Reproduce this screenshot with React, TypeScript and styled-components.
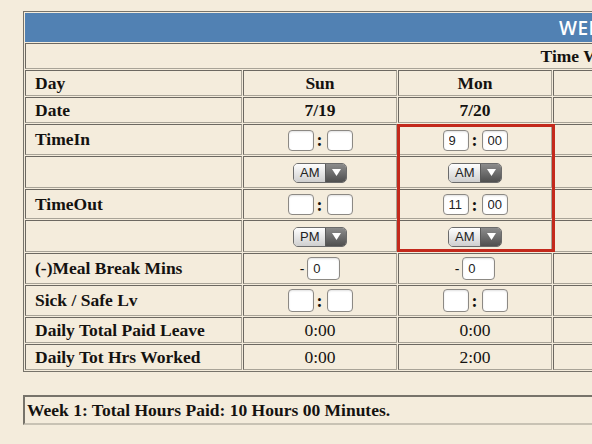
import React from 'react';
import styled, { createGlobalStyle } from 'styled-components';

const GlobalStyle = createGlobalStyle`
  html, body {
    margin: 0;
    padding: 0;
    background: #f4ecdc;
    overflow: hidden;
  }
  body {
    font-family: 'Liberation Serif', 'Times New Roman', serif;
    color: #141210;
  }
`;

const Page = styled.div`
  padding: 11px 0 0 23px;
  width: 1200px;
`;

const Sheet = styled.div`
  position: relative;
  width: 1130px;
`;

const Grid = styled.table`
  width: 1130px;
  table-layout: fixed;
  border-collapse: separate;
  border-spacing: 1px;
  border: 1px solid #77736a;
`;

const Row = styled.tr<{ $h: number }>`
  height: ${({ $h }) => $h}px;
`;

const TitleBar = styled.td`
  background: #5181b3;
  color: #fff;
  text-align: center;
  font-family: 'Open Sans', 'DejaVu Sans', sans-serif;
  font-size: 19px;
  font-weight: 600;
  letter-spacing: 0.5px;
  padding: 0 0 0 12px;
`;

const Cell = styled.td<{ $bold?: boolean; $label?: boolean }>`
  border: 1px solid;
  border-color: #6c6861 #a8a397 #a8a397 #6c6861;
  padding: 0 0 0 ${({ $label }) => ($label ? '9px' : '0')};
  text-align: ${({ $label }) => ($label ? 'left' : 'center')};
  font-size: 17.5px;
  font-weight: ${({ $bold }) => ($bold ? 'bold' : 'normal')};
  vertical-align: middle;
  white-space: nowrap;
  overflow: hidden;
`;

const Caption = styled(Cell)`
  padding-left: 8px;
`;

const Pair = styled.span`
  display: inline-flex;
  align-items: center;
  vertical-align: middle;
`;

const Box = styled.input<{ $w?: number; $h?: number }>`
  width: ${({ $w }) => $w ?? 26}px;
  height: ${({ $h }) => $h ?? 21}px;
  box-sizing: border-box;
  margin: 0;
  padding: 0 0 0 5px;
  border: 1px solid #8c8984;
  border-radius: 4px;
  background: #fff;
  box-shadow: inset 0 1px 2px rgba(0, 0, 0, 0.12);
  font-family: 'Liberation Sans', Arial, sans-serif;
  font-size: 13px;
  color: #222;
  outline: none;
`;

const Colon = styled.span`
  font-family: 'Liberation Serif', 'Times New Roman', serif;
  font-weight: bold;
  font-size: 18px;
  margin: 0 4px 0 3px;
  line-height: 1;
`;

const Dash = styled.span`
  font-family: 'Liberation Sans', Arial, sans-serif;
  font-size: 14px;
  margin-right: 3px;
`;

const Picker = styled.span`
  display: inline-flex;
  vertical-align: middle;
  width: 54px;
  height: 20px;
  box-sizing: border-box;
  border: 1px solid #6b6b6b;
  border-radius: 5px;
  overflow: hidden;
`;

const PickerValue = styled.span`
  flex: 1;
  background: linear-gradient(#fefefe, #cfcfcf);
  font-family: 'Liberation Sans', Arial, sans-serif;
  font-size: 13px;
  line-height: 18px;
  color: #222;
  text-align: left;
  padding-left: 6px;
`;

const PickerArrow = styled.span`
  width: 20px;
  display: flex;
  align-items: center;
  justify-content: center;
  background: linear-gradient(#8c8c8c, #4f4f4f);
  border-left: 1px solid #5a5a5a;
`;

const Highlight = styled.div`
  position: absolute;
  left: 374px;
  top: 113px;
  width: 158px;
  height: 128px;
  box-sizing: border-box;
  border: 3px solid #c3291c;
  pointer-events: none;
`;

const Summary = styled.div`
  margin-top: 23px;
  width: 1130px;
  height: 30px;
  box-sizing: border-box;
  border: 2px solid;
  border-color: #77736a #c8c2b4 #c8c2b4 #77736a;
  padding-left: 2px;
  font-size: 17.5px;
  font-weight: bold;
  line-height: 26px;
`;

interface IDay {
  name: string;
  date: string;
  inH: string;
  inM: string;
  inP: string;
  outH: string;
  outM: string;
  outP: string;
  meal: string;
  leave: string;
  worked: string;
}

const days: IDay[] = [
  { name: 'Sun', date: '7/19', inH: '', inM: '', inP: 'AM', outH: '', outM: '', outP: 'PM', meal: '0', leave: '0:00', worked: '0:00' },
  { name: 'Mon', date: '7/20', inH: '9', inM: '00', inP: 'AM', outH: '11', outM: '00', outP: 'AM', meal: '0', leave: '0:00', worked: '2:00' },
  { name: 'Tue', date: '7/21', inH: '9', inM: '00', inP: 'AM', outH: '5', outM: '00', outP: 'PM', meal: '0', leave: '0:00', worked: '8:00' },
  { name: 'Wed', date: '7/22', inH: '', inM: '', inP: 'AM', outH: '', outM: '', outP: 'PM', meal: '0', leave: '0:00', worked: '0:00' },
  { name: 'Thu', date: '7/23', inH: '', inM: '', inP: 'AM', outH: '', outM: '', outP: 'PM', meal: '0', leave: '0:00', worked: '0:00' },
  { name: 'Fri', date: '7/24', inH: '', inM: '', inP: 'AM', outH: '', outM: '', outP: 'PM', meal: '0', leave: '0:00', worked: '0:00' },
  { name: 'Sat', date: '7/25', inH: '', inM: '', inP: 'AM', outH: '', outM: '', outP: 'PM', meal: '0', leave: '0:00', worked: '0:00' },
];

// label + Sun/Mon/Tue as seen, the rest fill out 1130px (2 border + 9 spacing)
const widths = [217, 154, 154, 155, 110, 110, 110, 109];

const TimeField = ({ h, m, tall }: { h: string; m: string; tall?: boolean }) => (
  <Pair>
    <Box defaultValue={h} $h={tall ? 23 : 21} />
    <Colon>:</Colon>
    <Box defaultValue={m} $h={tall ? 23 : 21} />
  </Pair>
);

const AmPm = ({ value }: { value: string }) => (
  <Picker>
    <PickerValue>{value}</PickerValue>
    <PickerArrow>
      <svg width="9" height="7" viewBox="0 0 9 7">
        <polygon points="0,0 9,0 4.5,7" fill="#fff" />
      </svg>
    </PickerArrow>
  </Picker>
);

const App = () => (
  <Page>
    <GlobalStyle />
    <Sheet>
      <Grid>
        <colgroup>
          {widths.map((w, i) => (
            <col key={i} style={{ width: w }} />
          ))}
        </colgroup>
        <tbody>
          <Row $h={29}>
            <TitleBar colSpan={8}>WEEK 1</TitleBar>
          </Row>
          <Row $h={26}>
            <Caption colSpan={8} $bold>Time Worked</Caption>
          </Row>
          <Row $h={26}>
            <Cell $label $bold>Day</Cell>
            {days.map(d => <Cell key={d.name} $bold>{d.name}</Cell>)}
          </Row>
          <Row $h={26}>
            <Cell $label $bold>Date</Cell>
            {days.map(d => <Cell key={d.name} $bold>{d.date}</Cell>)}
          </Row>
          <Row $h={31}>
            <Cell $label $bold>TimeIn</Cell>
            {days.map(d => <Cell key={d.name}><TimeField h={d.inH} m={d.inM} /></Cell>)}
          </Row>
          <Row $h={32}>
            <Cell $label />
            {days.map(d => <Cell key={d.name}><AmPm value={d.inP} /></Cell>)}
          </Row>
          <Row $h={30}>
            <Cell $label $bold>TimeOut</Cell>
            {days.map(d => <Cell key={d.name}><TimeField h={d.outH} m={d.outM} /></Cell>)}
          </Row>
          <Row $h={32}>
            <Cell $label />
            {days.map(d => <Cell key={d.name}><AmPm value={d.outP} /></Cell>)}
          </Row>
          <Row $h={31}>
            <Cell $label $bold>(-)Meal Break Mins</Cell>
            {days.map(d => (
              <Cell key={d.name}>
                <Pair>
                  <Dash>-</Dash>
                  <Box defaultValue={d.meal} $w={33} $h={23} />
                </Pair>
              </Cell>
            ))}
          </Row>
          <Row $h={31}>
            <Cell $label $bold>Sick / Safe Lv</Cell>
            {days.map(d => <Cell key={d.name}><TimeField h="" m="" tall /></Cell>)}
          </Row>
          <Row $h={26}>
            <Cell $label $bold>Daily Total Paid Leave</Cell>
            {days.map(d => <Cell key={d.name}>{d.leave}</Cell>)}
          </Row>
          <Row $h={26}>
            <Cell $label $bold>Daily Tot Hrs Worked</Cell>
            {days.map(d => <Cell key={d.name}>{d.worked}</Cell>)}
          </Row>
        </tbody>
      </Grid>
      <Highlight />
    </Sheet>
    <Summary>Week 1: Total Hours Paid: 10 Hours 00 Minutes.</Summary>
  </Page>
);

export default App;
